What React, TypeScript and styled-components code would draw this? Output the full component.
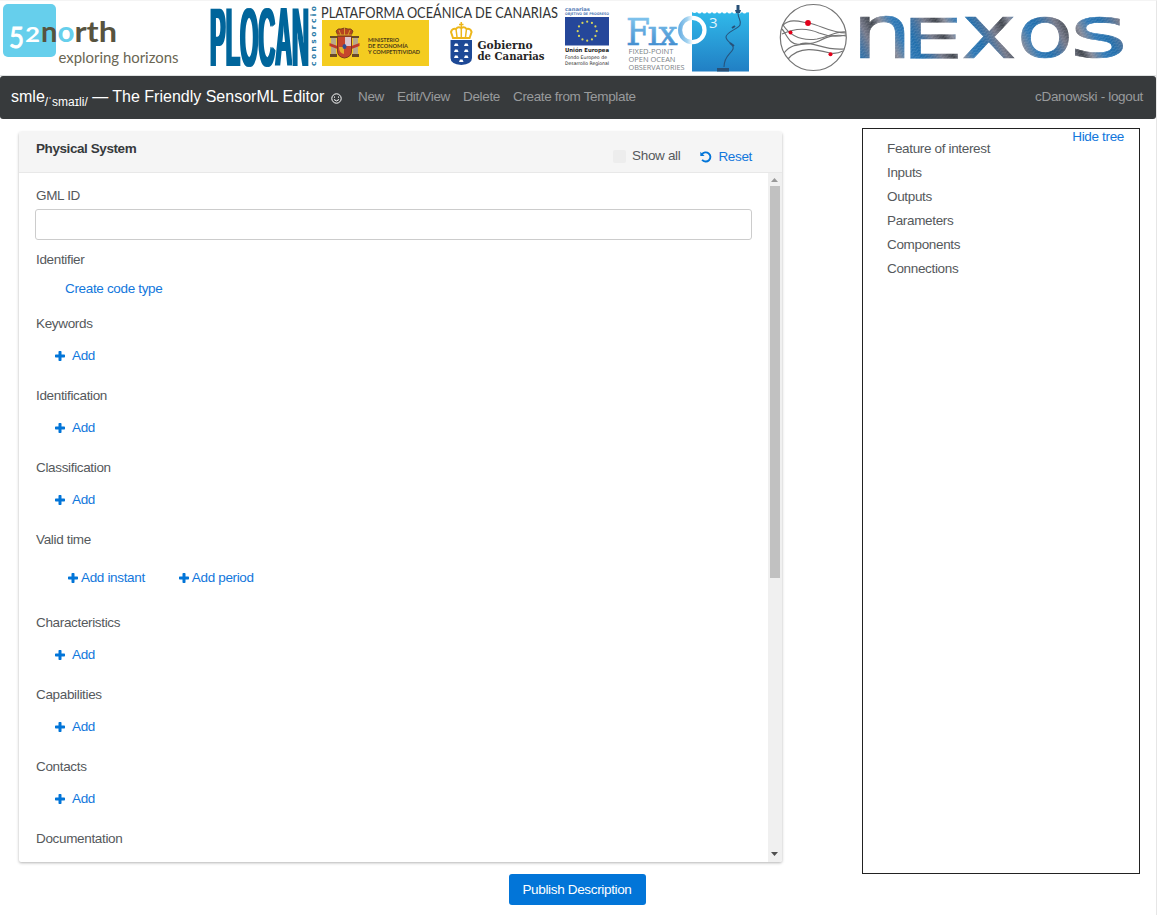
import React from "react";
import styled, { createGlobalStyle } from "styled-components";

const GlobalStyle = createGlobalStyle`
  * { box-sizing: border-box; }
  body {
    margin: 0;
    background: #fff;
    color: #55595c;
    font-family: "Liberation Sans", Arial, sans-serif;
    font-size: 13.5px;
    letter-spacing: -0.34px;
    line-height: 24px;
  }
`;

const Page = styled.div`
  width: 1157px;
  height: 915px;
  overflow: hidden;
  border-top: 1px solid #f4f4f4;
  border-right: 1px solid #e6e6e6;
`;

const LogoBar = styled.header`
  display: flex;
  height: 75px;
  border-bottom: 1px solid #dfe2e2;
  letter-spacing: 0;
`;

const Logo = styled.svg`
  display: block;
  flex: none;
  height: 75px;
`;

const Navbar = styled.nav`
  display: flex;
  align-items: center;
  height: 43px;
  padding: 0 13px 1px 11px;
  border-radius: 3px;
  background: #373a3c;
  color: #999b9c;
`;

const Brand = styled.span`
  display: flex;
  align-items: baseline;
  width: 347px;
  color: #fff;
  font-size: 16px;
  letter-spacing: 0;
  white-space: pre;
`;

const Phonetic = styled.span`
  font-size: 12px;
  line-height: 1;
  position: relative;
  top: 4px;
`;

const Smiley = styled.svg`
  width: 11px;
  height: 11px;
  margin-left: 7px;
  position: relative;
  top: 2px;
`;

const NavLink = styled.a`
  margin-right: 13px;
`;

const UserLink = styled.a`
  margin-left: auto;
`;

const Content = styled.main`
  display: flex;
  justify-content: space-between;
  align-items: flex-start;
  padding: 9px 16px 0 19px;
`;

const Card = styled.section`
  width: 763px;
  height: 730px;
  margin-top: 4px;
  overflow: hidden;
  border-radius: 2px;
  box-shadow: 0 1px 3px rgba(0, 0, 0, 0.3);
`;

const CardHeader = styled.div`
  display: flex;
  height: 41px;
  padding: 5px 30px 0 17px;
  background: #f5f5f5;
  border-bottom: 1px solid #e8e8e8;
`;

const CardTitle = styled.h1`
  margin: 0 auto 0 0;
  color: #373a3c;
  font-size: 13.5px;
  letter-spacing: -0.42px;
  line-height: 24px;
`;

const ShowAll = styled.label`
  display: flex;
  align-items: center;
  height: 24px;
  margin: 7px 20px 0 0;
`;

const Checkbox = styled.span`
  width: 13px;
  height: 13px;
  margin-right: 6px;
  border-radius: 2px;
  background: #ededed;
`;

const ResetLink = styled.a`
  display: flex;
  align-items: center;
  gap: 6px;
  height: 24px;
  margin-top: 8px;
  color: #1277dc;
`;

const CardBody = styled.div`
  display: flex;
  height: 689px;
`;

const Form = styled.div`
  flex: 1;
  padding: 11px 17px 0;
  overflow: hidden;
`;

const Field = styled.div<{ $height: number }>`
  height: ${(p) => p.$height}px;
`;

const TextInput = styled.input`
  display: block;
  width: 717px;
  height: 31px;
  margin: 1px 0 0 -1px;
  border: 1px solid #ccc;
  border-radius: 3px;
`;

const Actions = styled.div<{ $indent: number; $top: number; $gap: number }>`
  display: flex;
  gap: 34px;
  padding: ${(p) => p.$top}px 0 0 ${(p) => p.$indent}px;

  svg {
    margin-right: ${(p) => p.$gap}px;
  }
`;

const ActionLink = styled.a`
  display: flex;
  align-items: center;
  color: #1277dc;
`;

const Scrollbar = styled.div`
  display: flex;
  flex-direction: column;
  align-items: center;
  width: 14px;
  padding-right: 1px;
  background: #f0f0f0;
`;

const Arrow = styled.svg`
  display: block;
  width: 7px;
  height: 4px;
`;

const Thumb = styled.div`
  width: 10px;
  height: 392px;
  margin: 4px 0 auto;
  background: #c1c1c1;
`;

const Tree = styled.aside`
  display: flex;
  justify-content: space-between;
  width: 278px;
  height: 746px;
  padding: 0 15px 0 24px;
  border: 1px solid #222;
`;

const TreeList = styled.ul`
  margin: 8px 0 0;
  padding: 0;
  list-style: none;
`;

const HideLink = styled.a`
  height: 24px;
  margin-top: -4px;
  color: #1277dc;
`;

const Footer = styled.footer`
  display: flex;
  justify-content: center;
  padding-right: 2px;
`;

const PublishButton = styled.button`
  width: 137px;
  height: 31px;
  padding: 0;
  border: 0;
  border-radius: 3px;
  background: #0275d8;
  color: #fff;
  font: inherit;
  letter-spacing: inherit;
  line-height: 29px;
`;

const Plus = () => (
  <svg width="10" height="10" viewBox="0 0 10 10">
    <path d="M4.200 0h1.600q.7 0 .7.700v2.800h2.800q.7 0 .7.700v1.600q0 .7-.7.700H6.500v2.800q0 .7-.7.700H4.200q-.7 0-.7-.7V6.500H.7Q0 6.500 0 5.800V4.200q0-.7.700-.7h2.800V.7q0-.7.700-.7z" fill="#0275d8" />
  </svg>
);

const Undo = () => (
  <svg width="12" height="12" viewBox="0 0 12 12" fill="none" stroke="#0275d8" strokeWidth="1.900">
    <path d="M1.900 3.500A4.600 4.600 0 1 1 2.100 8.700" />
    <path d="M.3.8v4.300h4.300z" fill="#0275d8" stroke="none" />
  </svg>
);

const NorthLogo = () => (
  <Logo width="205" viewBox="0 1 205 75" fontFamily="Lato, sans-serif">
    <rect x="3" y="4" width="53" height="53" rx="5" fill="#66cfec" />
    <g fontSize="29" fontWeight="700">
      <text x="9" y="48" fill="#fff" textLength="15" fontWeight="400" stroke="#fff" strokeWidth=".9" lengthAdjust="spacingAndGlyphs">5</text>
      <text x="25" y="41.500" fill="#fff" fontSize="20" textLength="15" lengthAdjust="spacingAndGlyphs">2</text>
      <text x="41" y="41.500" fill="#57533f">n</text>
      <text x="57.500" y="41.500" fill="#66cfec" textLength="17" lengthAdjust="spacingAndGlyphs">o</text>
      <text x="74.500" y="41.500" fill="#57533f" textLength="42.500" lengthAdjust="spacingAndGlyphs">rth</text>
    </g>
    <text x="58.500" y="62.500" fontSize="15.500" fill="#6a6653" textLength="120" lengthAdjust="spacingAndGlyphs">exploring horizons</text>
  </Logo>
);

const stars = Array.from({ length: 12 }, (_, i) => {
  const a = (i * Math.PI) / 6;
  return { x: 587.2 + 9.5 * Math.sin(a), y: 31.2 - 9.5 * Math.cos(a) };
});

const PlocanLogo = () => (
  <Logo width="415" viewBox="205 1 415 75" fontFamily="Lato, sans-serif">
    <filter id="widen" x="-5%" y="-5%" width="110%" height="110%">
      <feMorphology operator="dilate" radius="1 0" />
    </filter>
    <text x="210" y="65.500" fontFamily="Liberation Sans, sans-serif" fontSize="83" fontWeight="700" fill="#00659b" textLength="99" lengthAdjust="spacingAndGlyphs" filter="url(#widen)">PLOCAN</text>
    <text transform="translate(316 66) rotate(-90)" fontFamily="DejaVu Sans, sans-serif" fontSize="7.500" fontWeight="700" fill="#2a7ba8" textLength="60">consorcio</text>
    <text x="321" y="17.500" fontSize="14.500" fill="#333" textLength="237" lengthAdjust="spacingAndGlyphs">PLATAFORMA OCEÁNICA DE CANARIAS</text>

    <rect x="322" y="20" width="107" height="46" fill="#f4cc20" />
    <g>
      <path d="M331 37h5v18h-5zM353 37h5v18h-5z" fill="#b9a98a" />
      <path d="M330 36h7v2h-7zM352 36h7v2h-7zM330 54h7v3h-7zM352 54h7v3h-7z" fill="#6a4a25" />
      <path d="M329.500 43l8 3v3l-8-3zM359.500 43l-8 3v3l8-3z" fill="#c03a2c" />
      <path d="M337.500 36h14v15q0 6-7 7-7-1-7-7z" fill="#c6452c" stroke="#7d3a1d" />
      <path d="M345 37h6v9h-6z" fill="#dcc5cc" />
      <path d="M339 47h5v7q-5-1-5-7z" fill="#e5ad2a" />
      <ellipse cx="344.500" cy="46.500" rx="2" ry="2.500" fill="#344e91" />
      <path d="M338 36l-2-5q2-3 5-2 3-2 7 0 3-1 5 2l-2 5z" fill="#b5441f" stroke="#6c401b" strokeWidth=".8" />
      <path d="M344.500 27v8M339 30l2 5M350 30l-2 5M337 35h15" stroke="#e1b22d" strokeWidth=".8" />
    </g>
    <g fontSize="5.500" fontWeight="700" fill="#4b3a18">
      <text x="368" y="42" textLength="31" lengthAdjust="spacingAndGlyphs">MINISTERIO</text>
      <text x="368" y="48" textLength="40" lengthAdjust="spacingAndGlyphs">DE ECONOMÍA</text>
      <text x="368" y="54" textLength="52" lengthAdjust="spacingAndGlyphs">Y COMPETITIVIDAD</text>
    </g>

    <path d="M450.500 40h21.500v18q0 6-10.700 7-10.800-1-10.800-7z" fill="#1e4996" />
    <g fill="#fff">
      {[43, 49, 55].map((y) => (
        <React.Fragment key={y}>
          <path d={`M454 ${y + 3}l1-2.500h2.500l1 2.500z`} />
          <path d={`M464 ${y + 3}l1-2.500h2.500l1 2.500z`} />
        </React.Fragment>
      ))}
      <path d="M459 62l1-2.500h2.500l1 2.500z" />
    </g>
    <path d="M453 38l-2-6q1-4 5-3 2-3 5.300-1 3-2 5.300 1 4-1 5 3l-2 6z" fill="none" stroke="#edb71b" strokeWidth="2" />
    <path d="M461.300 22v15M459 24.500h4.500M456 29l1 8M466.500 29l-1 8M453 38h17" stroke="#edb71b" strokeWidth="1.500" />
    <g fontFamily="DejaVu Serif, serif" fontWeight="700" fontSize="10.500" fill="#252525">
      <text x="477.500" y="48.500" textLength="55" lengthAdjust="spacingAndGlyphs">Gobierno</text>
      <text x="477.500" y="60" textLength="67" lengthAdjust="spacingAndGlyphs">de Canarias</text>
    </g>

    <g fontFamily="DejaVu Sans, sans-serif">
      <text x="565" y="11" fontSize="5" fontWeight="700" fill="#557bb5" textLength="25" lengthAdjust="spacingAndGlyphs">canarias</text>
      <text x="565" y="15" fontSize="3.500" fontWeight="700" fill="#557bb5" textLength="44" lengthAdjust="spacingAndGlyphs">OBJETIVO DE PROGRESO</text>
      <rect x="565" y="17" width="44" height="28.500" fill="#25479a" />
      {stars.map((s, i) => (
        <circle key={i} cx={s.x} cy={s.y} r="1.100" fill="#d7d55c" />
      ))}
      <text x="565" y="52" fontSize="5.500" fontWeight="700" fill="#222" textLength="44" lengthAdjust="spacingAndGlyphs">Unión Europea</text>
      <text x="565" y="59" fontSize="4.800" fill="#222" textLength="42" lengthAdjust="spacingAndGlyphs">Fondo Europeo de</text>
      <text x="565" y="65" fontSize="4.800" fill="#222" textLength="44" lengthAdjust="spacingAndGlyphs">Desarrollo Regional</text>
    </g>
  </Logo>
);

const FixoLogo = () => (
  <Logo width="145" viewBox="620 1 145 75" fontFamily="Open Sans, sans-serif">
    <defs>
      <linearGradient id="sea" x1="0" y1="0" x2="0" y2="1">
        <stop stopColor="#30b9ea" />
        <stop offset="1" stopColor="#217fc4" />
      </linearGradient>
      <linearGradient id="letters" gradientUnits="userSpaceOnUse" x1="0" y1="17" x2="0" y2="45">
        <stop stopColor="#81c4ed" />
        <stop offset="1" stopColor="#448fd0" />
      </linearGradient>
      <linearGradient id="ring" x1="0" x2="1">
        <stop stopColor="#6fb2e4" />
        <stop offset=".3" stopColor="#a5d4f0" />
        <stop offset=".52" stopColor="#fff" />
      </linearGradient>
    </defs>
    <path d="M692 12q2.500 2 5 0 2.500 3 5 0 2.500 3 5 0 2.500 3 5 0 2.500 3 5 0 2.500 3 5 0 2.500 3 5 0 2.500 3 5 0 2.500 3 5 0 2.500 3 5 0 2.500 3 5 0 1 1 2 0v59.500h-57z" fill="url(#sea)" />
    <g fontFamily="DejaVu Serif, serif" fill="url(#letters)" stroke="url(#letters)" strokeWidth=".6">
      <text x="626" y="44.500" fontSize="37" textLength="24" lengthAdjust="spacingAndGlyphs">F</text>
      <text x="647.500" y="44.500" fontSize="34" textLength="12" lengthAdjust="spacingAndGlyphs">ı</text>
      <text x="658.500" y="44.500" fontSize="34" textLength="19" lengthAdjust="spacingAndGlyphs">x</text>
    </g>
    <circle cx="692.300" cy="30" r="12.200" fill="none" stroke="url(#ring)" strokeWidth="4.200" />
    <text x="709" y="28" fontSize="15" fill="#e2f4fc">3</text>
    <path d="M738 13c0 6 4 8 2 12s-14 7-14 12 9 7 7 12-9 7-9 18" fill="none" stroke="#26557f" strokeWidth="1.100" />
    <path d="M735 10h6l-1 3h-4zM736.500 5h3v5h-3zM717 68h12v3.500h-12z" fill="#285077" />
    <path d="M732 28l3-2M730 43l4 3" stroke="#285077" strokeWidth="2" />
    <g fontSize="7.500" fill="#7d8388">
      <text x="628.500" y="54" textLength="45" lengthAdjust="spacingAndGlyphs">FIXED-POINT</text>
      <text x="628.500" y="62" textLength="47" lengthAdjust="spacingAndGlyphs">OPEN OCEAN</text>
      <text x="628.500" y="70" textLength="56" lengthAdjust="spacingAndGlyphs">OBSERVATORIES</text>
    </g>
  </Logo>
);

const NexosLogo = () => (
  <Logo width="391" viewBox="765 1 391 75">
    <defs>
      <linearGradient id="water" gradientUnits="userSpaceOnUse" x1="858" y1="58" x2="910" y2="32" spreadMethod="repeat">
        <stop stopColor="#1f6dab" />
        <stop offset=".14" stopColor="#3f6f9e" />
        <stop offset=".3" stopColor="#747889" />
        <stop offset=".48" stopColor="#3e434b" />
        <stop offset=".62" stopColor="#858998" />
        <stop offset=".82" stopColor="#2d77b5" />
        <stop offset="1" stopColor="#1f6dab" />
      </linearGradient>
      <pattern id="ripples" width="5" height="3" patternUnits="userSpaceOnUse" patternTransform="rotate(-25)">
        <path d="M0 1q1.500-1.500 2.500 0t2.500 0" stroke="#fff" strokeOpacity=".22" strokeWidth=".8" fill="none" />
      </pattern>
      <pattern id="surface" x="765" y="0" width="400" height="80" patternUnits="userSpaceOnUse" viewBox="765 0 400 80">
        <rect x="765" width="400" height="80" fill="url(#water)" />
        <rect x="765" width="400" height="80" fill="url(#ripples)" />
      </pattern>
    </defs>
    <g fill="none" stroke="#747474" strokeWidth="1.200">
      <circle cx="813.300" cy="37.500" r="33" />
      <path d="M783 25c8-7 18-3 25-2 13 2 22 10 38 10" />
      <path d="M782 34c15-7 28-5 37-1 10 4 18 4 27 2" />
      <path d="M783 25c8 12 20 16 34 14 12-2 18-8 29-7" />
      <path d="M782 29c5 6 8 17 18 15 12-4 23 7 44 5" />
      <path d="M784 53c10-13 23-6 35-12 10-5 17-7 27-5" />
      <path d="M788 59c12-14 30-9 42-6 6 1 9 0 13-2" />
    </g>
    <g fill="#e2001a">
      <circle cx="808" cy="23" r="2.900" />
      <circle cx="790.500" cy="32.500" r="2" />
      <circle cx="830.500" cy="54.300" r="2" />
    </g>
    <g fill="url(#surface)" stroke="url(#surface)" strokeWidth=".6" fontFamily="DejaVu Sans, sans-serif" fontSize="74">
      <text x="852" y="57.500" textLength="60" lengthAdjust="spacingAndGlyphs">n</text>
      <text x="901" y="57.500" fontSize="55.500" strokeWidth=".3" textLength="63" lengthAdjust="spacingAndGlyphs">E</text>
      <text x="961" y="57.500" textLength="56" lengthAdjust="spacingAndGlyphs">x</text>
      <text x="1016.500" y="57" fontSize="71" textLength="57" lengthAdjust="spacingAndGlyphs">o</text>
      <text x="1069.500" y="57" fontSize="71" textLength="58.500" lengthAdjust="spacingAndGlyphs">s</text>
    </g>
  </Logo>
);

const AddField = ({ label }: { label: string }) => (
  <Field $height={72}>
    {label}
    <Actions $indent={19} $top={8} $gap={7}>
      <ActionLink><Plus />Add</ActionLink>
    </Actions>
  </Field>
);

const treeItems = ["Feature of interest", "Inputs", "Outputs", "Parameters", "Components", "Connections"];

export default function App() {
  return (
    <Page>
      <GlobalStyle />
      <LogoBar>
        <NorthLogo />
        <PlocanLogo />
        <FixoLogo />
        <NexosLogo />
      </LogoBar>
      <Navbar>
        <Brand>
          smle<Phonetic>/ˈsmaɪli/</Phonetic> — The Friendly SensorML Editor
          <Smiley viewBox="0 0 11 11" fill="none" stroke="#fff">
            <circle cx="5.500" cy="5.500" r="4.700" />
            <path d="M3 6.500q2.500 2.800 5 0M3.500 3.500v1.200M7.500 3.500v1.200" />
          </Smiley>
        </Brand>
        <NavLink>New</NavLink>
        <NavLink>Edit/View</NavLink>
        <NavLink>Delete</NavLink>
        <NavLink>Create from Template</NavLink>
        <UserLink>cDanowski - logout</UserLink>
      </Navbar>
      <Content>
        <Card>
          <CardHeader>
            <CardTitle>Physical System</CardTitle>
            <ShowAll><Checkbox />Show all</ShowAll>
            <ResetLink><Undo />Reset</ResetLink>
          </CardHeader>
          <CardBody>
            <Form>
              <Field $height={64}>
                GML ID
                <TextInput aria-label="GML ID" />
              </Field>
              <Field $height={64}>
                Identifier
                <Actions $indent={29} $top={5} $gap={0}>
                  <ActionLink>Create code type</ActionLink>
                </Actions>
              </Field>
              <AddField label="Keywords" />
              <AddField label="Identification" />
              <AddField label="Classification" />
              <Field $height={83}>
                Valid time
                <Actions $indent={32} $top={14} $gap={3}>
                  <ActionLink><Plus />Add instant</ActionLink>
                  <ActionLink><Plus />Add period</ActionLink>
                </Actions>
              </Field>
              <AddField label="Characteristics" />
              <AddField label="Capabilities" />
              <AddField label="Contacts" />
              <Field $height={24}>Documentation</Field>
            </Form>
            <Scrollbar>
              <Arrow style={{ marginTop: 5 }} viewBox="0 0 7 4"><path d="M0 4L3.500 0 7 4z" fill="#999" /></Arrow>
              <Thumb />
              <Arrow style={{ marginBottom: 6 }} viewBox="0 0 7 4"><path d="M0 0h7L3.500 4z" fill="#505050" /></Arrow>
            </Scrollbar>
          </CardBody>
        </Card>
        <Tree>
          <TreeList>
            {treeItems.map((t) => <li key={t}>{t}</li>)}
          </TreeList>
          <HideLink>Hide tree</HideLink>
        </Tree>
      </Content>
      <Footer>
        <PublishButton>Publish Description</PublishButton>
      </Footer>
    </Page>
  );
}
